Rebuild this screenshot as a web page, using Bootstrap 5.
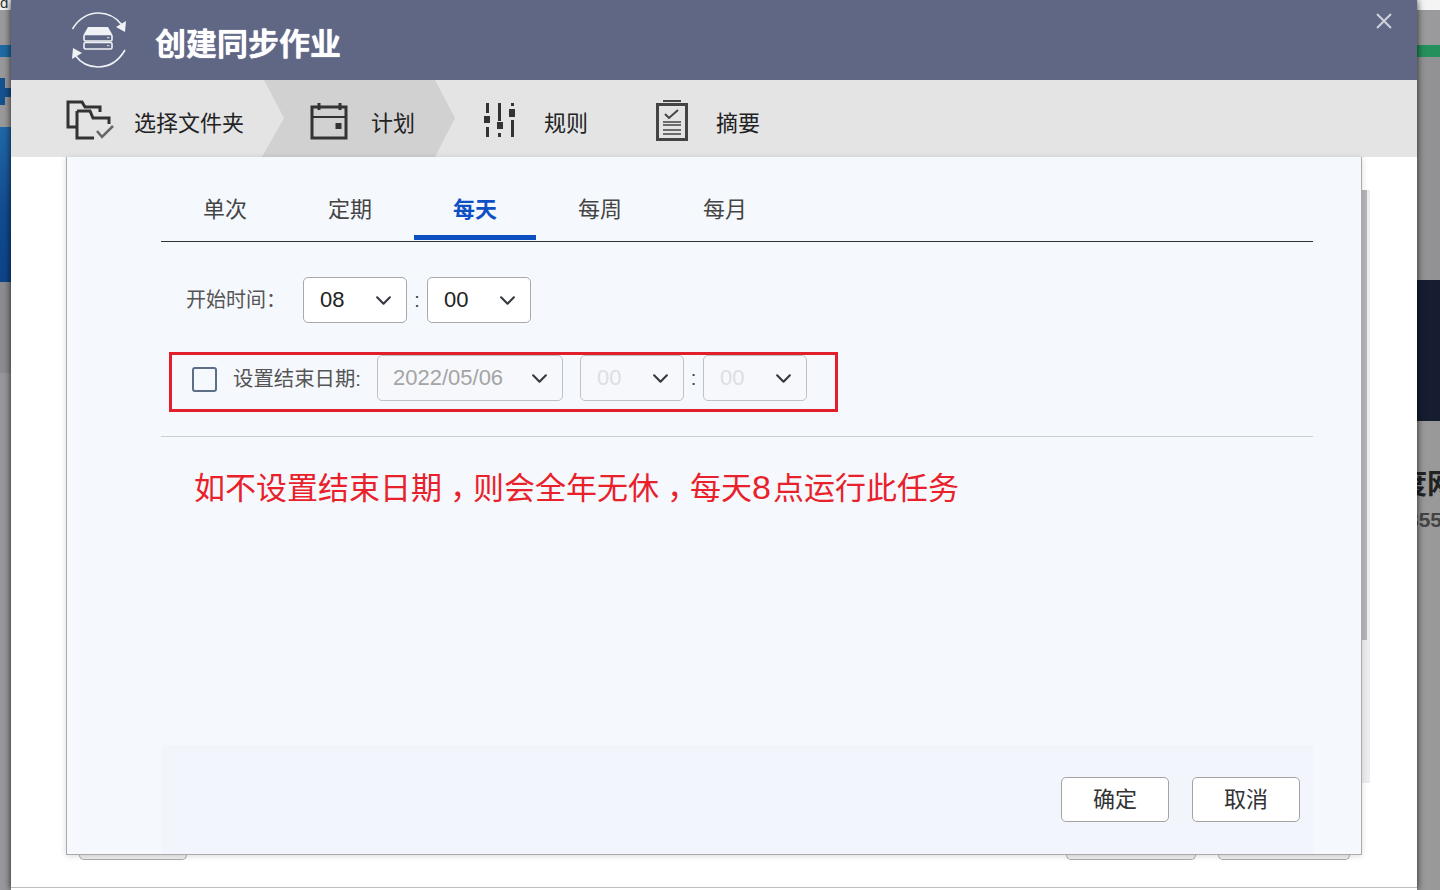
<!DOCTYPE html>
<html lang="zh-CN">
<head>
<meta charset="utf-8">
<title>创建同步作业</title>
<link href="https://cdn.jsdelivr.net/npm/bootstrap@5.3.0/dist/css/bootstrap.min.css" rel="stylesheet">
<style>
html,body{height:890px;overflow:hidden}
body{font-family:"Liberation Sans","Noto Sans CJK SC",sans-serif;background:#97979b;color:#222}
.stage{height:890px}
.side-l{width:11px;flex:none;overflow:hidden}
.side-r{width:23px;flex:none;overflow:hidden}
.sg-white{height:10px;background:#f4f4f4;font-size:15px;line-height:6px;color:#333;overflow:hidden}
.sg-grey-a{height:35px;background:#9a9a9c}
.sg-blue{height:12px;background:#1f6aa3}
.sg-grey-b{height:21px;background:#98989a}
.sg-plus{height:27px;background:#98989a}
.sg-plus svg{display:block}
.sg-grey-c{height:22px;background:#99999b}
.sg-hero{height:155px;background:linear-gradient(180deg,#2068a8,#124b8e 55%,#0d4489)}
.sg-grey-d{height:91px;background:#8c8c90}
.sg-grey-e{height:517px;background:#98989c}
.sg-green{height:12px;background:#24905c}
.sg-grey-f{height:223px;background:#929295}
.sg-navy{height:141px;background:#161d31}
.sg-grey-g{height:469px;background:#999;padding-top:47px;white-space:nowrap}
.cut-a{margin-left:-18px;font-size:28px;font-weight:700;line-height:34px;color:#222}
.cut-b{margin-left:-10px;margin-top:6px;font-size:21px;font-weight:700;line-height:24px;color:#444}
.win{width:1406px;flex:none;background:#fff;box-shadow:0 0 7px rgba(0,0,0,.8);position:relative;z-index:2}
.win-head{height:80px;background:#5f6785;padding-left:60px}
.win-head svg{display:block}
.win-title{margin:10px 0 0 28px;font-size:31px;font-weight:700;color:#fff;line-height:40px;letter-spacing:0;text-shadow:0 0 1px #fff}
.win-x{width:18px;height:18px;margin:12px 24px 0 0;padding:0;background:none;border:0}
.win-x svg{display:block}
.steps{height:77px;background:#e4e4e4}
.stp{height:77px;padding-top:5px;font-size:22px;color:#222;flex:none}
.stp svg{display:block;flex:none}
.stp span{margin-top:5px}
.stp-1{width:251px;padding-left:55px;gap:20px}
.stp-2{width:193px;padding-left:48px;gap:23px;background:#d1d1d1;clip-path:polygon(2px 0,173px 0,193px 38px,173px 77px,0 77px,22px 38px)}
.stp-3{width:173px;padding-left:29px;gap:27px}
.stp-4{padding-left:28px;gap:27px}
.win-main{height:731px;padding-left:55px;border-bottom:1px solid #bdbdbd}
.sheet-col{width:1296px;flex:none}
.sheet{height:698px;background:#f5f8fd;border:1px solid #aaa;border-top:0;box-shadow:0 1px 6px rgba(0,0,0,.15);padding-left:94px;padding-right:48px;position:relative;z-index:1}
.peek{height:5px;padding:0 12px 0 13px}
.peek-a{width:108px;height:5px;border:1px solid #aaa;border-top:0;border-radius:0 0 5px 5px;background:#eee}
.peek-b{width:130px;height:5px;border:1px solid #aaa;border-top:0;border-radius:0 0 5px 5px;background:#eee}
.peek-c{width:132px;height:5px;border:1px solid #aaa;border-top:0;border-radius:0 0 5px 5px;background:#eee}
.peek-gap{gap:22px}
.track{width:8px;height:593px;margin-top:33px;background:#ececef;flex:none}
.thumb{width:5px;height:450px;background:#b4b4ba}
.tabbar{height:85px;border-bottom:1.5px solid #333;padding-left:1.5px}
.tabbar .nav-link{width:122px;margin:0 1.5px;height:83px;padding:39px 0 0;font-size:22px;line-height:28px;color:#444;text-align:center;border-radius:0}
.tabbar .nav-link.active{color:#0f4fc4;font-weight:700;border-bottom:5px solid #0b4fc0}
.row-start{margin-top:35px;margin-left:25px;height:46px}
.lbl-start{width:117px;font-size:20px;color:#555}
.pick.form-select{width:104px;height:46px;padding:0 0 0 16px;font-size:22px;line-height:44px;color:#222;border:1px solid #a9a9a9;border-radius:5px;background-position:right 14px center;background-size:17px 17px;box-shadow:none;flex:none}
.pick.form-select:disabled{background-color:#f6f8fc;color:#dcdee3;border-color:#bfc1c4}
.pick-wide.form-select{width:186px;padding-left:15px}
.pick-wide.form-select:disabled{color:#a4a4a4}
.sep{width:20px;text-align:center;font-size:20px;line-height:44px;color:#444;flex:none}
.sep-n{width:19px}
.redbox{width:669px;height:60px;margin:29px 0 0 8px;border:3px solid #e2202c;padding:0 0 8px 20px}
.chk.form-check-input{width:25px;height:25px;margin:3px 0 0;background-color:#f5f8fd;border:2px solid #5d6f86;border-radius:3px;flex:none}
.lbl-end{margin:3px 0 0 16px;width:144px;font-size:20.400px;color:#555;flex:none;white-space:nowrap}
.gap16{margin-left:17px}
.rule{height:1px;background:#cfcfcf;margin-top:24px}
.note{margin:29px 0 0 33px;font-size:31px;line-height:40px;color:#e8212b;white-space:nowrap}
.cm{display:inline-block;font-family:"Noto Sans CJK TC",sans-serif;transform:translateY(9px)}
.dg{font-size:34px;letter-spacing:2px}
.foot{height:109px;margin-top:auto;background:#f2f5fc;padding:32px 13px 0 0;gap:23px}
.act.btn{width:108px;height:45px;padding:0;font-size:22px;line-height:43px;color:#333;background:#fff;border:1px solid #a3a3a3;border-radius:5px}
</style>
</head>
<body>
<div class="stage d-flex">
  <div class="side-l">
    <div class="sg-white">d</div>
    <div class="sg-grey-a"></div>
    <div class="sg-blue"></div>
    <div class="sg-grey-b"></div>
    <div class="sg-plus"><svg width="11" height="27" viewBox="0 0 11 27"><path d="M0 0H5V10H11V19H5V27H0Z" fill="#14518f"/></svg></div>
    <div class="sg-grey-c"></div>
    <div class="sg-hero"></div>
    <div class="sg-grey-d"></div>
    <div class="sg-grey-e"></div>
  </div>

  <div class="win d-flex flex-column">
    <div class="win-head d-flex align-items-center">
      <svg width="56" height="56" viewBox="0 0 56 56" fill="none">
        <path d="M1.500 17C8 6 18 1 27 1C36 1 45 5 51 13" stroke="#f1f2f5" stroke-width="1.600"/>
        <path d="M55 9L54 20L45 15Z" fill="#f1f2f5"/>
        <path d="M54 38C47 50 37 55 27 55C17 55 9 50 4 43" stroke="#f1f2f5" stroke-width="1.600"/>
        <path d="M1 47L2 36L11 41Z" fill="#f1f2f5"/>
        <path d="M17 15H37L41 22H13Z" fill="#f1f2f5"/>
        <rect x="13" y="22.500" width="28" height="6.500" rx="1.500" stroke="#f1f2f5" stroke-width="1.600"/>
        <rect x="13" y="30.500" width="28" height="6.500" rx="1.500" stroke="#f1f2f5" stroke-width="1.600"/>
        <path d="M36 25.700H38.500M36 33.700H38.500" stroke="#c9ccd6" stroke-width="1.200"/>
      </svg>
      <div class="win-title">创建同步作业</div>
      <button class="win-x ms-auto align-self-start" type="button" aria-label="关闭">
        <svg width="18" height="18" viewBox="0 0 18 18"><path d="M2 2L16 16M16 2L2 16" stroke="#cfd2dc" stroke-width="2"/></svg>
      </button>
    </div>

    <div class="steps d-flex">
      <div class="stp stp-1 d-flex align-items-center">
        <svg width="48" height="42" viewBox="0 0 48 42" fill="none" stroke="#333" stroke-width="3">
          <path d="M11 27H2V2H16L19 7H34V12"/>
          <path d="M11 11V38H28M11 11H24L27 18H43V24"/>
          <path d="M31 31L36 37L47 26" stroke="#666" stroke-width="2.500"/>
        </svg>
        <span>选择文件夹</span>
      </div>
      <div class="stp stp-2 d-flex align-items-center">
        <svg width="38" height="38" viewBox="0 0 38 38" fill="none" stroke="#333" stroke-width="3">
          <rect x="2" y="5" width="34" height="31"/>
          <path d="M2 15H36" stroke-width="2"/>
          <path d="M9 1V8M30 1V8"/>
          <rect x="25.500" y="21" width="6" height="6" fill="#333" stroke="none"/>
        </svg>
        <span>计划</span>
      </div>
      <div class="stp stp-3 d-flex align-items-center">
        <svg width="33" height="36" viewBox="0 0 33 36" fill="#333">
          <rect x="2" y="0" width="3" height="10"/><rect x="0" y="13" width="6" height="7"/><rect x="2" y="24" width="3" height="10"/>
          <rect x="14" y="0" width="3" height="18"/><rect x="13" y="19" width="6" height="7"/><rect x="14" y="30" width="3" height="4"/>
          <rect x="27" y="0" width="3" height="3"/><rect x="25" y="6" width="6" height="8"/><rect x="27" y="17" width="3" height="17"/>
        </svg>
        <span>规则</span>
      </div>
      <div class="stp stp-4 d-flex align-items-center">
        <svg width="33" height="42" viewBox="0 0 33 42" fill="none" stroke="#444">
          <rect x="1.500" y="4.500" width="29" height="35" stroke-width="3"/>
          <path d="M7 1H25" stroke-width="2"/>
          <path d="M9 14L13 18L22 10" stroke-width="2"/>
          <path d="M7 22H25M7 25H25M7 30H25M7 34H25" stroke-width="1.600"/>
        </svg>
        <span>摘要</span>
      </div>
    </div>

    <div class="win-main d-flex">
      <div class="sheet-col">
        <div class="sheet d-flex flex-column">
          <ul class="nav tabbar">
            <li class="nav-item"><a class="nav-link" href="#">单次</a></li>
            <li class="nav-item"><a class="nav-link" href="#">定期</a></li>
            <li class="nav-item"><a class="nav-link active" href="#">每天</a></li>
            <li class="nav-item"><a class="nav-link" href="#">每周</a></li>
            <li class="nav-item"><a class="nav-link" href="#">每月</a></li>
          </ul>
          <div class="row-start d-flex align-items-center">
            <label class="lbl-start">开始时间：</label>
            <select class="form-select pick"><option>08</option></select>
            <span class="sep">:</span>
            <select class="form-select pick"><option>00</option></select>
          </div>
          <div class="redbox d-flex align-items-center">
            <input class="form-check-input chk" type="checkbox" aria-label="设置结束日期">
            <label class="lbl-end">设置结束日期:</label>
            <select class="form-select pick pick-wide" disabled><option>2022/05/06</option></select>
            <select class="form-select pick gap16" disabled><option>00</option></select>
            <span class="sep sep-n">:</span>
            <select class="form-select pick" disabled><option>00</option></select>
          </div>
          <div class="rule"></div>
          <div class="note">如不设置结束日期<span class="cm">，</span>则会全年无休<span class="cm">，</span>每天<span class="dg">8</span>点运行此任务</div>
          <div class="foot d-flex justify-content-end">
            <button class="btn act" type="button">确定</button>
            <button class="btn act" type="button">取消</button>
          </div>
        </div>
        <div class="peek d-flex justify-content-between">
          <div class="peek-a"></div>
          <div class="d-flex peek-gap"><div class="peek-b"></div><div class="peek-c"></div></div>
        </div>
      </div>
      <div class="track"><div class="thumb"></div></div>
    </div>
  </div>

  <div class="side-r">
    <div class="sg-white"></div>
    <div class="sg-grey-a"></div>
    <div class="sg-green"></div>
    <div class="sg-grey-f"></div>
    <div class="sg-navy"></div>
    <div class="sg-grey-g">
      <div class="cut-a">度网</div>
      <div class="cut-b">355</div>
    </div>
  </div>
</div>
<script src="https://cdn.jsdelivr.net/npm/bootstrap@5.3.0/dist/js/bootstrap.bundle.min.js"></script>
</body>
</html>
